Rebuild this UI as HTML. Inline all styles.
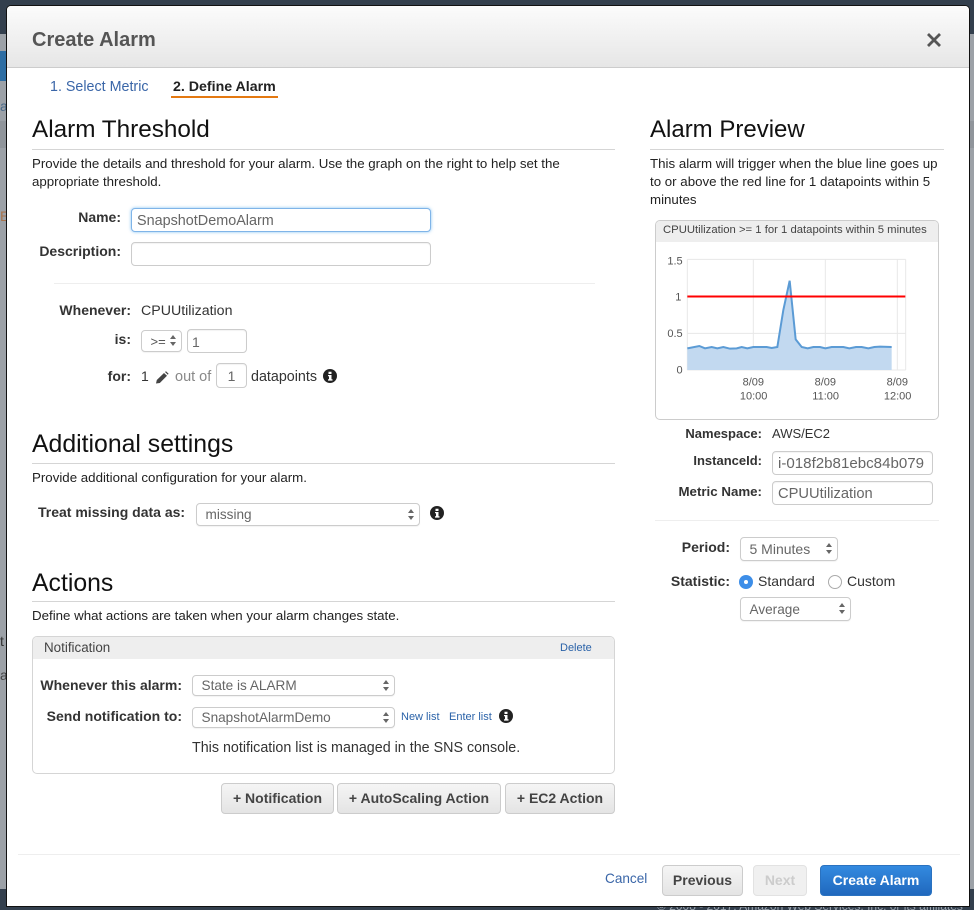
<!DOCTYPE html>
<html><head><meta charset="utf-8"><style>
html,body{margin:0;padding:0;background:#9ca1a7}
#w{width:974px;height:910px;position:relative;overflow:hidden;background:#9ca1a7;font-family:"Liberation Sans",sans-serif;font-size:13.3px;color:#333;filter:blur(.35px)}
.a{position:absolute;white-space:nowrap}
.l{font-weight:bold;text-align:right;color:#333}
h2{position:absolute;margin:0;font-weight:normal;font-size:24.3px;line-height:28px;color:#111;white-space:nowrap}
.hr{position:absolute;height:1px;background:#d5d5d5}
.i{position:absolute;box-sizing:border-box;border:1px solid #ccc;border-radius:4px;background:#fff;color:#666;font-size:14.4px;padding-left:5px;white-space:nowrap;overflow:hidden;box-shadow:inset 0 1px 1px rgba(0,0,0,.05)}
.s{position:absolute;box-sizing:border-box;border:1px solid #ccc;border-radius:4px;background:#fff;color:#666;font-size:13.6px;padding-left:8.500px;white-space:nowrap;box-shadow:0 1px 1px rgba(0,0,0,.05)}
.s:after{content:"";position:absolute;right:5px;top:50%;margin-top:-6px;width:0;height:0;border-left:3px solid transparent;border-right:3px solid transparent;border-bottom:4px solid #666}
.s:before{content:"";position:absolute;right:5px;top:50%;margin-top:1px;width:0;height:0;border-left:3px solid transparent;border-right:3px solid transparent;border-top:4px solid #666}
.b{position:absolute;box-sizing:border-box;border:1px solid #ccc;border-radius:4px;background:linear-gradient(#f5f5f5,#e4e4e4);font-weight:bold;font-size:14px;color:#444;text-align:center}
.link{color:#2a62a8}
</style></head><body><div id="w">
<div class="a" style="left:0;top:0;width:974px;height:34px;background:#333f4d"></div>
<div class="a" style="left:0;top:51px;width:7px;height:30px;background:#2d6da3"></div>
<div class="a" style="left:0;top:121px;width:974px;height:27px;background:#90959b"></div>
<div class="a" style="left:0;top:889px;width:974px;height:21px;background:#333f4d"></div>
<div class="a" style="left:657px;top:899px;font-size:12px;color:#9aa3ad">© 2008 - 2017, Amazon Web Services, Inc. or its affiliates</div>
<div class="a" style="left:0;top:98px;font-size:14px;color:#4a6a8a">a</div>
<div class="a" style="left:0;top:208px;font-size:14px;color:#a8734c">E</div>
<div class="a" style="left:0;top:633px;font-size:14px;color:#333">t</div>
<div class="a" style="left:0;top:667px;font-size:14px;color:#444">a</div>

<div class="a" style="left:6px;top:5px;width:964px;height:902px;box-sizing:border-box;background:#fff;border:1px solid #111;border-radius:5px 5px 0 0;overflow:hidden">
<div style="height:61px;background:linear-gradient(#fbfbfb,#e6e6e6);border-bottom:1px solid #ccc"></div>
</div>

<div class="a" style="left:32px;top:28px;font-size:20px;line-height:24px;font-weight:bold;color:#555">Create Alarm</div>
<svg class="a" style="left:926px;top:32px" width="16" height="16" viewBox="0 0 16 16"><path d="M2 2L14 14M14 2L2 14" stroke="#555" stroke-width="2.800" fill="none"/></svg>

<div class="a link" style="left:50px;top:79px;font-size:14.3px;line-height:16px;color:#3a66a8">1. Select Metric</div>
<div class="a" style="left:173px;top:79px;font-size:14.2px;line-height:16px;font-weight:bold;color:#222">2. Define Alarm</div>
<div class="a" style="left:171px;top:96px;width:107px;height:2px;background:#e47911"></div>

<h2 style="left:32px;top:116px">Alarm Threshold</h2>
<div class="hr" style="left:32px;top:149px;width:583px"></div>
<div class="a" style="left:32px;top:155px;line-height:18px;color:#222">Provide the details and threshold for your alarm. Use the graph on the right to help set the<br>appropriate threshold.</div>

<div class="a l" style="left:21px;width:100px;top:209px;font-size:14px">Name:</div>
<div class="i" style="left:131px;top:208px;width:300px;height:24px;line-height:25px;border-color:#7fb4e8;box-shadow:0 0 3px rgba(82,168,236,.7)">SnapshotDemoAlarm</div>
<div class="a l" style="left:21px;width:100px;top:243px;font-size:14px">Description:</div>
<div class="i" style="left:131px;top:242px;width:300px;height:24px"></div>
<div class="hr" style="left:54px;top:283px;width:541px;background:#eee"></div>

<div class="a l" style="left:31px;width:100px;top:302px;font-size:14px">Whenever:</div>
<div class="a" style="left:141px;top:303px;font-size:14.2px">CPUUtilization</div>
<div class="a l" style="left:31px;width:100px;top:331px;font-size:14px">is:</div>
<div class="s" style="left:141px;top:330px;width:41px;height:22px;line-height:21px;color:#555;font-size:13px">&gt;=</div>
<div class="i" style="left:187px;top:329px;width:60px;height:24px;line-height:25px;font-size:14px;padding-left:4px">1</div>
<div class="a l" style="left:31px;width:100px;top:368px;font-size:14px">for:</div>
<div class="a" style="left:141px;top:368px;font-size:14px">1</div>
<svg class="a" style="left:155px;top:371px" width="14" height="13" viewBox="0 0 14 13"><path d="M1 12.500L1.800 9L9 2L12 4.800L4.800 12Z M10 1L11 0.200L13.600 2.800L12.800 3.800Z" fill="#444"/></svg>
<div class="a" style="left:175px;top:369px;font-size:14.5px;color:#888">out of</div>
<div class="i" style="left:216px;top:363px;width:31px;height:25px;line-height:25px;padding:0;text-align:center;font-size:14px">1</div>
<div class="a" style="left:251px;top:369px;font-size:14.3px">datapoints</div>
<svg class="a" style="left:323px;top:369px" width="14" height="14" viewBox="0 0 14 14"><circle cx="7" cy="7" r="7" fill="#222"/><path d="M5.500 2.800h3v2.200h-3zM5 6h3.500v4.200h1V11.600h-4.500V10.200h1V7.300h-1z" fill="#fff"/></svg>

<h2 style="left:32px;top:431px;font-size:24.8px">Additional settings</h2>
<div class="hr" style="left:32px;top:463px;width:583px"></div>
<div class="a" style="left:32px;top:469px;line-height:18px;color:#222">Provide additional configuration for your alarm.</div>
<div class="a l" style="left:38px;top:504px;font-size:14px">Treat missing data as:</div>
<div class="s" style="left:196px;top:503px;width:224px;height:23px;line-height:22px">missing</div>
<svg class="a" style="left:430px;top:506px" width="14" height="14" viewBox="0 0 14 14"><circle cx="7" cy="7" r="7" fill="#222"/><path d="M5.500 2.800h3v2.200h-3zM5 6h3.500v4.200h1V11.600h-4.500V10.200h1V7.300h-1z" fill="#fff"/></svg>

<h2 style="left:32px;top:570px;font-size:24.8px">Actions</h2>
<div class="hr" style="left:32px;top:601px;width:583px"></div>
<div class="a" style="left:32px;top:607px;line-height:18px;color:#222">Define what actions are taken when your alarm changes state.</div>

<div class="a" style="left:32px;top:636px;width:583px;height:138px;box-sizing:border-box;border:1px solid #d5d5d5;border-radius:5px;overflow:hidden"><div style="height:22px;background:#eee"></div></div>
<div class="a" style="left:44px;top:640px;color:#444;font-size:13.4px">Notification</div>
<div class="a link" style="left:560px;top:642px;font-size:11px">Delete</div>
<div class="a l" style="right:792px;top:677px;font-size:14px">Whenever this alarm:</div>
<div class="s" style="left:192px;top:675px;width:203px;height:21px;line-height:20px">State is ALARM</div>
<div class="a l" style="right:792px;top:708px;font-size:14px">Send notification to:</div>
<div class="s" style="left:192px;top:707px;width:203px;height:21px;line-height:20px">SnapshotAlarmDemo</div>
<div class="a link" style="left:401px;top:711px;font-size:11px">New list</div>
<div class="a link" style="left:449px;top:711px;font-size:11px">Enter list</div>
<svg class="a" style="left:499px;top:709px" width="14" height="14" viewBox="0 0 14 14"><circle cx="7" cy="7" r="7" fill="#222"/><path d="M5.500 2.800h3v2.200h-3zM5 6h3.500v4.200h1V11.600h-4.500V10.200h1V7.300h-1z" fill="#fff"/></svg>
<div class="a" style="left:192px;top:740px;font-size:14.3px;color:#333">This notification list is managed in the SNS console.</div>

<div class="b" style="left:221px;top:783px;width:113px;height:31px;line-height:29px">+ Notification</div>
<div class="b" style="left:337px;top:783px;width:164px;height:31px;line-height:29px">+ AutoScaling Action</div>
<div class="b" style="left:505px;top:783px;width:110px;height:31px;line-height:29px">+ EC2 Action</div>

<h2 style="left:650px;top:116px;font-size:24px">Alarm Preview</h2>
<div class="hr" style="left:650px;top:149px;width:294px"></div>
<div class="a" style="left:650px;top:155px;line-height:18px;color:#222">This alarm will trigger when the blue line goes up<br>to or above the red line for 1 datapoints within 5<br>minutes</div>

<div class="a" style="left:655px;top:220px;width:284px;height:200px;box-sizing:border-box;border:1px solid #ccc;border-radius:5px;overflow:hidden"><div style="height:21px;background:#eee"></div></div>
<div class="a" style="left:663px;top:224px;font-size:11.3px;color:#444">CPUUtilization &gt;= 1 for 1 datapoints within 5 minutes</div>
<svg class="a" style="left:640px;top:210px" width="320" height="220" viewBox="0 0 960 660">
<g stroke="#e8e8e8" stroke-width="3" fill="none"><path d="M142 148H797M142 370H797M142 480H797M142 148V480M340 148V480M556 148V480M772 148V480M797 148V480"/></g>
<path d="M142 480V415L178 408L195 415L215 411L232 415L250 411L270 416L290 415L305 411L322 415L340 411L380 411L395 414L412 411L430 300L449 212L467 388L485 411L503 415L520 411L540 411L556 415L575 411L610 411L628 415L648 411L665 411L685 415L703 411L720 410L755 411V480Z" fill="#c2d9f0"/>
<path d="M142 415L178 408L195 415L215 411L232 415L250 411L270 416L290 415L305 411L322 415L340 411L380 411L395 414L412 411L430 300L449 212L467 388L485 411L503 415L520 411L540 411L556 415L575 411L610 411L628 415L648 411L665 411L685 415L703 411L720 410L755 411" fill="none" stroke="#5b9bd5" stroke-width="6"/>
<path d="M142 259.500H796" stroke="#f00" stroke-width="6"/>
<g font-family="Liberation Sans" font-size="33" fill="#555" text-anchor="end"><text x="128" y="163">1.5</text><text x="124" y="271">1</text><text x="128" y="381">0.5</text><text x="128" y="491">0</text></g>
<g font-family="Liberation Sans" font-size="33" fill="#555" text-anchor="middle"><text x="340" y="527">8/09</text><text x="341" y="568">10:00</text><text x="556" y="527">8/09</text><text x="557" y="568">11:00</text><text x="772" y="527">8/09</text><text x="773" y="568">12:00</text></g>
</svg>

<div class="a l" style="right:212px;top:426px;font-size:13px">Namespace:</div>
<div class="a" style="left:772px;top:426px;font-size:13px">AWS/EC2</div>
<div class="a l" style="right:212px;top:453px;font-size:13px">InstanceId:</div>
<div class="i" style="left:772px;top:451px;width:161px;height:24px;line-height:24px;font-size:15.1px">i-018f2b81ebc84b079</div>
<div class="a l" style="right:212px;top:484px">Metric Name:</div>
<div class="i" style="left:772px;top:481px;width:161px;height:24px;line-height:25px;font-size:14.7px">CPUUtilization</div>
<div class="hr" style="left:655px;top:520px;width:284px;background:#eee"></div>
<div class="a l" style="right:244px;top:539px;font-size:14px">Period:</div>
<div class="s" style="left:740px;top:537px;width:98px;height:24px;line-height:23px;font-size:14px">5 Minutes</div>
<div class="a l" style="right:244px;top:573px;font-size:14px">Statistic:</div>
<div class="a" style="left:739px;top:575px;width:14px;height:14px;border-radius:50%;background:#3d8ee8"></div>
<div class="a" style="left:744px;top:580px;width:4px;height:4px;border-radius:50%;background:#fff"></div>
<div class="a" style="left:758px;top:573px;font-size:14px">Standard</div>
<div class="a" style="left:828px;top:575px;width:14px;height:14px;box-sizing:border-box;border-radius:50%;border:1px solid #aaa;background:#fff"></div>
<div class="a" style="left:847px;top:573px;font-size:14px">Custom</div>
<div class="s" style="left:740px;top:597px;width:111px;height:24px;line-height:23px">Average</div>

<div class="hr" style="left:18px;top:854px;width:942px;background:#eee"></div>
<div class="a link" style="left:605px;top:871px;font-size:13.6px;color:#3a66a8">Cancel</div>
<div class="b" style="left:662px;top:865px;width:81px;height:31px;line-height:29px">Previous</div>
<div class="b" style="left:753px;top:865px;width:54px;height:31px;line-height:29px;color:#ccc;background:#f0f0f0;border-color:#e2e2e2">Next</div>
<div class="b" style="left:820px;top:865px;width:112px;height:31px;line-height:29px;color:#fff;background:linear-gradient(#338ae0,#2068bd);border-color:#2a72c0">Create Alarm</div>
</div></body></html>
